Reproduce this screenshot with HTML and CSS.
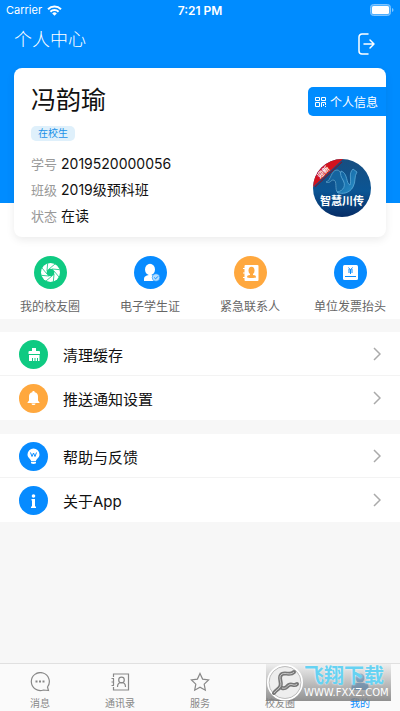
FILE: index.html
```html
<!DOCTYPE html>
<html lang="zh-CN">
<head>
  <meta charset="UTF-8">
  <meta name="viewport" content="width=device-width, initial-scale=1.0">
  <title>个人中心</title>
  <link rel="stylesheet" href="styles.css">
</head>
<body>
  <header class="hero">
    <div class="status-bar">
      <span class="carrier">Carrier
        <svg width="15" height="11" viewBox="0 0 15 11" fill="none" stroke="#fff" stroke-width="2"><path d="M1 4.2a9.3 9.3 0 0 1 13 0M3.4 6.7a5.9 5.9 0 0 1 8.2 0"/><path d="M5.2 8.4a3.3 3.3 0 0 1 4.6 0L7.5 10.8z" fill="#fff" stroke="none"/></svg>
      </span>
      <span class="time">7:21 PM</span>
      <span class="battery">
        <svg width="24" height="12" viewBox="0 0 24 12"><rect x=".5" y=".5" width="20" height="11" rx="3" fill="#4dafff" stroke="#80c5ff"/><rect x="2" y="2" width="17" height="8" rx="1.5" fill="#fff"/><path d="M22 4v4q1.5-.6 1.5-2T22 4" fill="#80c5ff"/></svg>
      </span>
    </div>
    <div class="title-bar">
      <h1>个人中心</h1>
      <button class="logout-btn" type="button" aria-label="退出登录">
        <svg width="18" height="22" viewBox="0 0 18 22" fill="none" stroke="#fff" stroke-width="1.5" stroke-linecap="round" stroke-linejoin="round"><path d="M10 1H4a3 3 0 0 0-3 3v14a3 3 0 0 0 3 3h6M6 11h10M12 7l4 4-4 4"/></svg>
      </button>
    </div>
    <section class="card">
      <h2>冯韵瑜</h2>
      <span class="tag">在校生</span>
      <dl class="info">
        <div><dt>学号</dt><dd>2019520000056</dd></div>
        <div><dt>班级</dt><dd>2019级预科班</dd></div>
        <div><dt>状态</dt><dd>在读</dd></div>
      </dl>
      <button class="profile-btn" type="button">
        <svg width="11" height="10" viewBox="0 0 11 10" fill="none" stroke="#fff"><path d="M.5.5h4v3h-4zM6.5.5h4v3h-4zM.5 5.5h4v4h-4z"/><path d="M6.5 10V5.5h4V8M8.5 7v2M10.5 9v1"/></svg>
        个人信息
      </button>
      <div class="avatar">
        <svg width="58" height="58" viewBox="0 0 58 58">
          <defs>
            <clipPath id="round"><circle cx="29" cy="29" r="29"/></clipPath>
            <linearGradient id="sea" x2="0" y2="1"><stop stop-color="#174e80"/><stop offset=".55" stop-color="#0b5594"/><stop offset="1" stop-color="#062d66"/></linearGradient>
            <linearGradient id="wing" x2="1" y2="1"><stop stop-color="#0b5796"/><stop offset="1" stop-color="#2d94cc"/></linearGradient>
          </defs>
          <g clip-path="url(#round)">
            <path fill="url(#sea)" d="M0 0h58v58H0z"/>
            <path d="M13 23c5-1 5-12 11-12 5 0 4 9 9 15-1 5-4 8-8 8-4-3 0-13-5-13-2 0-3 4-7 2z" fill="#14649f" stroke="#6ba9cf" stroke-width=".7"/>
            <path d="M28 12c7 2 5 13 9 14 2-5-2-11 3-16l4 3c-3 4-1 10-4 15-3 6-11 8-16 5 7-1 9-7 6-12-2-3-3-6-2-9z" fill="url(#wing)" stroke="#65b3df" stroke-width=".7"/>
            <path d="M0 28 30 0H0z" fill="#d4131e"/>
            <path d="M2 28 29 3" stroke="#8c1020" stroke-width="1"/>
            <text class="ribbon" x="12" y="15" transform="rotate(-44 12 15)" text-anchor="middle">迎新</text>
          </g>
          <text class="avatar-name" x="29" y="46" text-anchor="middle">智慧川传</text>
        </svg>
      </div>
    </section>
  </header>

  <nav class="shortcuts">
    <a href="#circle">
      <svg width="33" height="33" viewBox="0 0 33 33"><circle cx="16.5" cy="16.5" r="16.5" fill="#0fca82"/><circle cx="16.5" cy="16.5" r="9.5" fill="#fff"/><circle cx="16.5" cy="16.5" r="3.8" fill="#0fca82"/><g stroke="#0fca82" stroke-width=".8"><path id="blade" d="M15 13 21 8"/><use href="#blade" transform="rotate(45 16.5 16.5)"/><use href="#blade" transform="rotate(90 16.5 16.5)"/><use href="#blade" transform="rotate(135 16.5 16.5)"/><use href="#blade" transform="rotate(180 16.5 16.5)"/><use href="#blade" transform="rotate(225 16.5 16.5)"/><use href="#blade" transform="rotate(270 16.5 16.5)"/><use href="#blade" transform="rotate(315 16.5 16.5)"/></g></svg>
      我的校友圈
    </a>
    <a href="#card">
      <svg width="33" height="33" viewBox="0 0 33 33"><circle cx="16.5" cy="16.5" r="16.5" fill="#078bff"/><ellipse cx="16" cy="13.5" rx="5" ry="5.7" fill="#fff"/><path d="M10 25v-2c0-3 3-4 6-4s6 1 6 4v2z" fill="#fff"/><circle cx="22" cy="21.5" r="3.8" fill="#b5deff" stroke="#078bff" stroke-width=".6"/><path d="m20.2 21.5 1.4 1.4 2.4-2.6" fill="none" stroke="#078bff"/></svg>
      电子学生证
    </a>
    <a href="#contact">
      <svg width="33" height="33" viewBox="0 0 33 33"><circle cx="16.5" cy="16.5" r="16.5" fill="#ffa83e"/><rect x="10.5" y="9" width="14" height="16" rx="1" fill="#fff"/><path d="M9 12.5h3M9 17h3M9 21.5h3" stroke="#fff" stroke-width="1.2"/><ellipse cx="17.5" cy="14.5" rx="3" ry="3.8" fill="#ffa83e"/><path d="M16 16h3v3c2 0 3 .8 3 2.3 0 1-9 1-9 0 0-1.500 1-2.300 3-2.300z" fill="#ffa83e"/></svg>
      紧急联系人
    </a>
    <a href="#invoice">
      <svg width="33" height="33" viewBox="0 0 33 33"><circle cx="16.5" cy="16.5" r="16.5" fill="#078bff"/><rect x="9" y="9" width="15" height="15" rx="1.5" fill="#fff"/><path d="m14.500 11.500 2 2.500 2-2.500M14 14h5M14 16h5M16.500 14v4M11 20.500h11" fill="none" stroke="#078bff"/></svg>
      单位发票抬头
    </a>
  </nav>

  <main class="menu">
    <ul class="group">
      <li><a href="#cache">
        <svg class="icon" width="29" height="29" viewBox="0 0 29 29"><circle cx="14.5" cy="14.5" r="14.5" fill="#0fca82"/><path d="M13 8h4v3h3q1 0 1 1v2H9.500v-2q0-1 1-1H13zM10 15h10.500v6H19v-3h-1v3h-1.500v-3h-1v3H14v-3h-1v3h-3z" fill="#fff"/></svg>
        <span>清理缓存</span>
        <svg class="arrow" width="8" height="14" viewBox="0 0 8 14"><path d="m1 1 6 6-6 6"/></svg>
      </a></li>
      <li><a href="#push">
        <svg class="icon" width="29" height="29" viewBox="0 0 29 29"><circle cx="14.5" cy="14.5" r="14.5" fill="#ffa83e"/><path d="M14.500 7c.8 0 1.200.5 1.200 1.200 2.300.5 3.300 2.300 3.300 4.300v4l1.500 2v.5h-12v-.5l1.500-2v-4c0-2 1-3.800 3.300-4.300 0-.7.400-1.200 1.200-1.200zM12.500 19.500h4c0 2-4 2-4 0z" fill="#fff"/></svg>
        <span>推送通知设置</span>
        <svg class="arrow" width="8" height="14" viewBox="0 0 8 14"><path d="m1 1 6 6-6 6"/></svg>
      </a></li>
    </ul>
    <ul class="group">
      <li><a href="#help">
        <svg class="icon" width="29" height="29" viewBox="0 0 29 29"><circle cx="14.5" cy="14.5" r="14.5" fill="#078bff"/><path d="M12 19c0-2-3.500-3-3.500-6.500a6 6 0 0 1 12 0C20.500 16 17 17 17 19zM12 19.700h5v1.500q-2.500 1.500-5 0z" fill="#fff"/><path d="m11.500 10.500 1.500 4 1.500-3.500 1.500 3.500 1.500-4" fill="none" stroke="#078bff"/></svg>
        <span>帮助与反馈</span>
        <svg class="arrow" width="8" height="14" viewBox="0 0 8 14"><path d="m1 1 6 6-6 6"/></svg>
      </a></li>
      <li><a href="#about">
        <svg class="icon" width="29" height="29" viewBox="0 0 29 29"><circle cx="14.5" cy="14.5" r="14.5" fill="#078bff"/><circle cx="14.5" cy="10" r="1.800" fill="#fff"/><path d="M12.500 13H16v7.500h1V22h-5v-1.500h1v-6h-.5z" fill="#fff"/></svg>
        <span>关于App</span>
        <svg class="arrow" width="8" height="14" viewBox="0 0 8 14"><path d="m1 1 6 6-6 6"/></svg>
      </a></li>
    </ul>
  </main>

  <footer class="tab-bar">
    <a href="#message">
      <svg width="20" height="20" viewBox="0 0 20 20"><path d="M18.500 18.500 13.500 18A9 9 0 1 1 17.500 15z"/><path d="M5.500 9.500h2M9 9.500h2M12.500 9.500h2" stroke-width="1.800"/></svg>
      消息
    </a>
    <a href="#contacts">
      <svg width="20" height="20" viewBox="0 0 20 20"><path d="M3.500 5V2h15v16h-15v-3M3.500 6.500v7"/><path d="M1.500 6.500H4M1.500 10H4M1.500 13.500H4"/><circle cx="11.500" cy="8" r="2.800"/><path d="M7.500 15c0-3 1.500-4.500 4-4.500s4 1.500 4 4.500"/></svg>
      通讯录
    </a>
    <a href="#service">
      <svg width="20" height="20" viewBox="0 0 20 20"><path d="m10 1.500 2.600 5.600 6 .8-4.400 4.200 1.100 6.100-5.300-3-5.300 3 1.100-6.100L1.400 7.900l6-.8z"/></svg>
      服务
    </a>
    <a href="#friends">
      <svg width="20" height="20" viewBox="0 0 20 20"><circle cx="10" cy="10" r="8"/></svg>
      校友圈
    </a>
    <a href="#me" class="active">
      <svg width="20" height="20" viewBox="0 0 20 20"><circle cx="10" cy="6" r="4.500"/><path d="M1.500 18v-3q0-4 4-4h9q4 0 4 4v3z"/></svg>
      我的
    </a>
    <div class="watermark">
      <svg width="38" height="37" viewBox="0 0 38 37"><circle cx="19" cy="18.500" r="17" fill="#999" stroke="#fff" stroke-width="2"/><circle cx="19" cy="18.500" r="16" fill="#eee" stroke="#aaa" stroke-width=".6"/><g fill="none" stroke="#777" stroke-width="4" stroke-linecap="round"><path d="M28 8c-4 4-8 0-12 2-5 3 1 9-2 13-1 2-4 3-6 6"/><path d="M31 20c-3 3-5-1-8 1s-3 4-7 3"/></g><g fill="none" stroke="#ddd" stroke-width=".8"><path d="M28 8c-4 4-8 0-12 2-5 3 1 9-2 13-1 2-4 3-6 6M31 20c-3 3-5-1-8 1s-3 4-7 3"/></g></svg>
      <div>
        <strong>飞翔下载</strong>
        <span>WWW.FXXZ.COM</span>
      </div>
    </div>
  </footer>
</body>
</html>
```
FILE: styles.css
```css
* { box-sizing: border-box; }
body { margin: 0; min-height: 100vh; display: flex; flex-direction: column; background: #f7f7f7; color: #111; font-family: Inter, 'Noto Sans CJK SC', sans-serif; }
h1, h2, ul, dl, dd { margin: 0; padding: 0; }
a { color: inherit; text-decoration: none; }
button { border: none; background: none; padding: 0; color: #fff; font-family: inherit; cursor: pointer; }
svg { display: block; flex: none; }

.hero { padding-bottom: 10px; background: linear-gradient(#008cff, #008cff) no-repeat #fff; background-size: 100% 203px; }
.status-bar { display: grid; grid-template-columns: 1fr auto 1fr; align-items: center; height: 20px; padding: 0 6px; color: #fff; font-size: 11px; }
.carrier { display: flex; align-items: center; gap: 5px; }
.time { font-size: 12px; font-weight: 600; }
.battery { justify-self: end; }
.title-bar { display: flex; justify-content: space-between; align-items: center; height: 48px; padding: 0 24px 0 14px; }
.title-bar h1 { color: #fff; font-size: 18px; font-weight: 300; line-height: 26px; margin-bottom: 8px; }

.card { position: relative; margin: 0 14px; padding: 14px 17px 8px; background: #fff; border-radius: 8px; box-shadow: 0 3px 8px rgba(0, 0, 0, 0.08); }
.card h2 { font-size: 25px; font-weight: 400; line-height: 36px; }
.tag { display: block; width: fit-content; margin-top: 8px; padding: 0 7px; border-radius: 5px; background: #dff0fb; color: #1a90e8; font-size: 10px; line-height: 15px; }
.info { margin-top: 10px; font-size: 14px; line-height: 26px; }
.info div { display: flex; gap: 4px; }
.info dt { color: #999; font-size: 13px; }
.profile-btn { position: absolute; top: 19px; right: 0; display: flex; align-items: center; gap: 4px; height: 29px; padding: 0 8px 0 7px; border-radius: 5px 0 0 5px; background: #008cff; font-size: 12px; }
.avatar { position: absolute; right: 15px; bottom: 20px; }
.avatar-name { fill: #fff; font-size: 11px; font-weight: 700; }
.ribbon { fill: #fff; font-size: 7px; font-weight: 700; }

.shortcuts { display: grid; grid-template-columns: repeat(4, 1fr); padding: 9px 0 2px; background: #fff; }
.shortcuts a { display: flex; flex-direction: column; align-items: center; gap: 8px; color: #666; font-size: 12px; line-height: 20px; white-space: nowrap; }

.menu { flex: 1; }
.group { margin-top: 13px; background: #fff; list-style: none; }
.group li { height: 44px; border-bottom: 1px solid #f3f3f3; }
.group li:last-child { border-bottom: none; }
.group a { display: flex; align-items: center; height: 44px; padding: 0 19px; font-size: 15px; }
.group + .group { margin-top: 14px; }
.group span { flex: 1; margin-left: 15px; }
.arrow { fill: none; stroke: #aaa; stroke-width: 1.5; }

.tab-bar { position: relative; display: grid; grid-template-columns: repeat(5, 1fr); height: 48px; border-top: 1px solid #e0e0e0; background: #fafafa; }
.tab-bar a { display: flex; flex-direction: column; align-items: center; padding-top: 8px; gap: 4px; color: #888; font-size: 10px; line-height: 15px; }
.tab-bar a svg { fill: none; stroke: #888; stroke-width: 1.2; }
.tab-bar .active { color: #078bff; }
.tab-bar .active svg { fill: #0870cf; stroke: none; }

.watermark { position: absolute; top: 0; right: 9px; display: flex; align-items: flex-start; width: 125px; height: 37px; background: linear-gradient(rgba(230, 230, 230, 0.6), rgba(125, 125, 125, 0.85)); color: #fff; pointer-events: none; }
.watermark strong { display: block; color: #66d2f2; font-size: 20px; line-height: 24px; text-shadow: 0 0 2px #fff; white-space: nowrap; }
.watermark span { display: block; font-family: 'DejaVu Sans', sans-serif; font-size: 10px; line-height: 10px; }
```
